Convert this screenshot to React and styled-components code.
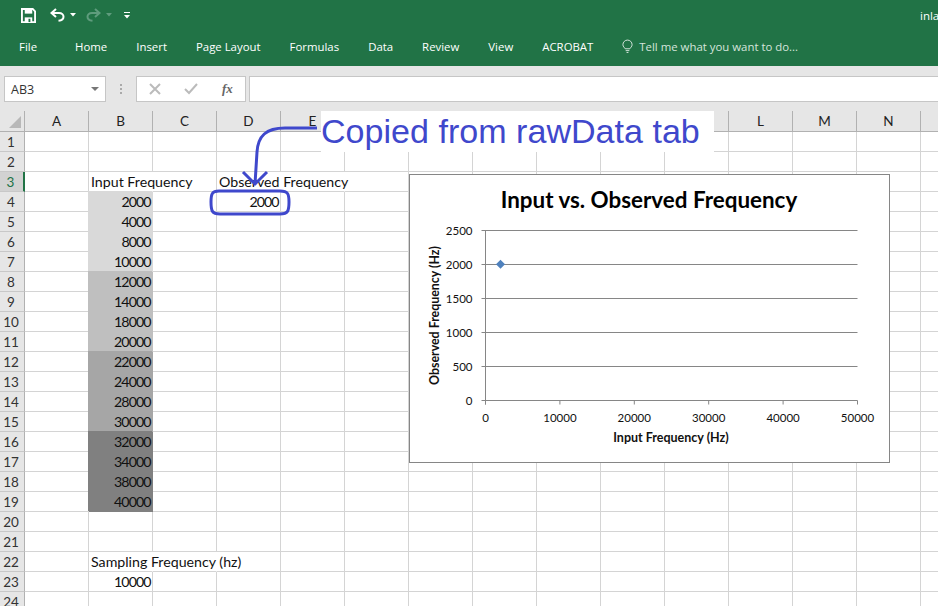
import React from "react";
import styled, { createGlobalStyle } from "styled-components";

// F to K sit under the white callout, so their letters don't show
const COLS = ["A", "B", "C", "D", "E", "", "", "", "", "", "", "L", "M", "N", ""];
const TABS = ["Home", "Insert", "Page Layout", "Formulas", "Data", "Review", "View", "ACROBAT"];
const INPUTS = [
  [2000, 4000, 8000, 10000],
  [12000, 14000, 18000, 20000],
  [22000, 24000, 28000, 30000],
  [32000, 34000, 38000, 40000],
];
const SHADES = ["#d9d9d9", "#bfbfbf", "#a6a6a6", "#808080"];

// cells with something in them, keyed by column + row
const cellData = {
  B3: { text: "Input Frequency", spill: true },
  D3: { text: "Observed Frequency", spill: true },
  E3: { spill: true },
  D4: { text: "2000", right: true },
  B22: { text: "Sampling Frequency (hz)", spill: true },
  C22: { spill: true },
  B23: { text: "10000", right: true },
};
INPUTS.forEach((group, g) =>
  group.forEach((value, i) => {
    cellData["B" + (4 + g * 4 + i)] = { text: String(value), right: true, fill: SHADES[g] };
  })
);

const GlobalStyle = createGlobalStyle`
  html, body {
    margin: 0;
    padding: 0;
    overflow: hidden;
    background: #fff;
  }
`;

const Page = styled.div`
  position: relative;
  width: 938px;
  height: 606px;
  overflow: hidden;
  font-family: "Lato", "Liberation Sans", sans-serif;
`;

const TitleBar = styled.div`
  height: 33px;
  box-sizing: border-box;
  background: #217346;
  display: flex;
  align-items: center;
  justify-content: space-between;
  padding: 0 0 3px 21px;
  color: #fff;
`;

const QuickAccess = styled.div`
  display: flex;
  align-items: center;
`;

const QuickIcon = styled.svg`
  display: block;
  margin-right: ${(p) => p.$gap || 0}px;
`;

const UserName = styled.span`
  font: 11.5px "Open Sans", sans-serif;
  width: 18px;
  overflow: hidden;
  white-space: nowrap;
`;

const TabBar = styled.div`
  height: 33px;
  background: #217346;
  display: flex;
  align-items: center;
  padding: 0 0 7px 19px;
  box-sizing: border-box;
  font: 11.4px "Open Sans", sans-serif;
  color: #fff;
`;

const Tab = styled.span`
  margin-right: 29px;
  white-space: nowrap;
  &:first-child {
    margin-right: 38px;
  }
`;

const TellMe = styled.span`
  display: flex;
  align-items: center;
  gap: 6px;
  color: #d5e5dc;
`;

const FormulaArea = styled.div`
  height: 45px;
  background: #e6e6e6;
  display: flex;
  padding: 10px 0 0 4px;
  box-sizing: border-box;
`;

const NameBox = styled.div`
  width: 102px;
  height: 26px;
  box-sizing: border-box;
  background: #fff;
  border: 1px solid #c6c6c6;
  display: flex;
  align-items: center;
  justify-content: space-between;
  padding: 0 6px;
  font: 12.5px "Open Sans", sans-serif;
  color: #333;
`;

const DropArrow = styled.span`
  width: 0;
  height: 0;
  border-left: 4px solid transparent;
  border-right: 4px solid transparent;
  border-top: 4px solid #777;
`;

const Dots = styled.div`
  width: 30px;
  display: flex;
  flex-direction: column;
  align-items: center;
  justify-content: center;
  gap: 2px;
  height: 26px;
  i {
    width: 2px;
    height: 2px;
    background: #aaa;
  }
`;

const FxBox = styled.div`
  width: 110px;
  height: 26px;
  box-sizing: border-box;
  background: #fff;
  border: 1px solid #c6c6c6;
  display: flex;
  align-items: center;
  padding-left: 12px;
  margin-right: 3px;
`;

const FxLabel = styled.span`
  font: italic bold 13px "Liberation Serif", serif;
  color: #666;
  margin-left: 23px;
`;

const FormulaInput = styled.div`
  flex: 1;
  height: 26px;
  box-sizing: border-box;
  background: #fff;
  border: 1px solid #c6c6c6;
  border-right: none;
`;

const Sheet = styled.div`
  display: grid;
  grid-template-columns: 25px repeat(15, 64px);
  grid-template-rows: 21px repeat(24, 20px);
`;

const Corner = styled.div`
  background: #e6e6e6;
  border-right: 1px solid #b1b1b1;
  border-bottom: 1px solid #b1b1b1;
  box-sizing: border-box;
  position: relative;
  &::after {
    content: "";
    position: absolute;
    right: 3px;
    bottom: 3px;
    border-left: 12px solid transparent;
    border-bottom: 12px solid #b8b8b8;
  }
`;

const ColHead = styled.div`
  background: #e6e6e6;
  border-right: 1px solid #b1b1b1;
  border-bottom: 1px solid #b1b1b1;
  box-sizing: border-box;
  font-size: 13.5px;
  color: #222;
  display: flex;
  align-items: center;
  justify-content: center;
`;

const RowHead = styled.div`
  background: ${(p) => (p.$active ? "#d2d2d2" : "#e6e6e6")};
  border-right: ${(p) => (p.$active ? "2px solid #217346" : "1px solid #b1b1b1")};
  border-bottom: 1px solid #c8c8c8;
  box-sizing: border-box;
  padding-right: 2px;
  font-size: 13.5px;
  color: ${(p) => (p.$active ? "#217346" : "#333")};
  display: flex;
  align-items: center;
  justify-content: center;
`;

const Cell = styled.div`
  box-sizing: border-box;
  border-right: 1px solid ${(p) => (p.$spill ? "transparent" : p.$fill || "#d4d4d4")};
  border-bottom: 1px solid ${(p) => p.$fill || "#d4d4d4"};
  background: ${(p) => p.$fill || "transparent"};
  box-shadow: ${(p) => (p.$fill ? `-1px -1px 0 ${p.$fill}` : "none")};
  font-size: 14.2px;
  line-height: 20px;
  color: #111;
  padding: 0 1.5px 0 2px;
  text-align: ${(p) => (p.$right ? "right" : "left")};
  letter-spacing: ${(p) => (p.$right ? "-0.95px" : "0")};
  white-space: nowrap;
`;

const Chart = styled.div`
  position: absolute;
  left: 409px;
  top: 174px;
  width: 481px;
  height: 289px;
  box-sizing: border-box;
  background: #fff;
  border: 1px solid #868686;
`;

const Callout = styled.div`
  position: absolute;
  left: 321px;
  top: 111px;
  width: 393px;
  height: 41px;
  background: #fff;
  color: #3f48cc;
  font: 34.1px/40px "Liberation Sans", sans-serif;
  white-space: nowrap;
`;

const Markup = styled.svg`
  position: absolute;
  left: 0;
  top: 0;
  pointer-events: none;
`;

const axisY = [2500, 2000, 1500, 1000, 500, 0];
const axisX = [0, 10000, 20000, 30000, 40000, 50000];

function FreqChart() {
  const left = 75.5;
  const right = 447.5;
  const top = 55.5;
  const bottom = 225.5;
  const step = (right - left) / 5;
  return (
    <svg width="479" height="287" fontFamily="Lato, sans-serif" fill="#111">
      <text x="239" y="33" textAnchor="middle" fontSize="22.4" fontWeight="700" fill="#000">
        Input vs. Observed Frequency
      </text>
      {axisY.map((v, i) => {
        const y = top + i * 34;
        return (
          <g key={v}>
            <line x1={left - 4} x2={right} y1={y} y2={y} stroke="#868686" />
            <text x={left - 13} y={y + 4} textAnchor="end" fontSize="11.5">
              {v}
            </text>
          </g>
        );
      })}
      <line x1={left} x2={left} y1={top} y2={bottom + 4} stroke="#868686" />
      {axisX.map((v, i) => {
        const x = left + i * step;
        return (
          <g key={v}>
            <line x1={x} x2={x} y1={bottom} y2={bottom + 4} stroke="#868686" />
            <text x={x} y={bottom + 21} textAnchor="middle" fontSize="11.5">
              {v}
            </text>
          </g>
        );
      })}
      <polygon points="90.5,84.8 95,89.3 90.5,93.8 86,89.3" fill="#4f81bd" />
      <text x="261" y="267" textAnchor="middle" fontSize="12.5" fontWeight="700">
        Input Frequency (Hz)
      </text>
      <text
        transform="translate(29 140.5) rotate(-90)"
        textAnchor="middle"
        fontSize="12.4"
        fontWeight="700"
      >
        Observed Frequency (Hz)
      </text>
    </svg>
  );
}

export default function App() {
  const rows = Array.from({ length: 24 }, (_, i) => i + 1);
  return (
    <Page>
      <GlobalStyle />
      <TitleBar>
        <QuickAccess>
          <QuickIcon width="15" height="15" viewBox="0 0 16 16" $gap={14}>
            <path d="M1 1h11.5L15 3.5V15H1z" fill="none" stroke="#fff" strokeWidth="2" />
            <rect x="4" y="1" width="8" height="5" fill="#fff" />
            <rect x="4" y="10" width="8" height="5" fill="#fff" />
            <rect x="8" y="11.5" width="2" height="3.5" fill="#217346" />
          </QuickIcon>
          <QuickIcon width="15" height="14" viewBox="0 0 15 14" $gap={5}>
            <path d="M6 1L1.5 5L6 9" fill="none" stroke="#fff" strokeWidth="2" />
            <path d="M2 5H9c3 0 4.5 2 4.5 3.7S12 12.4 8.5 12.8" fill="none" stroke="#fff" strokeWidth="2" />
          </QuickIcon>
          <QuickIcon width="6" height="4" viewBox="0 0 6 4" $gap={10}>
            <path d="M0 0h6L3 3.5z" fill="#fff" />
          </QuickIcon>
          <QuickIcon width="15" height="14" viewBox="0 0 15 14" $gap={5}>
            <path d="M9 1L13.5 5L9 9" fill="none" stroke="#5f9c7d" strokeWidth="2" />
            <path d="M13 5H6C3 5 1.5 7 1.5 8.7S3 12.4 6.5 12.8" fill="none" stroke="#5f9c7d" strokeWidth="2" />
          </QuickIcon>
          <QuickIcon width="6" height="4" viewBox="0 0 6 4" $gap={12}>
            <path d="M0 0h6L3 3.5z" fill="#5f9c7d" />
          </QuickIcon>
          <QuickIcon width="6" height="7" viewBox="0 0 6 7">
            <path d="M0 0h6v1H0zM0 3h6L3 6.5z" fill="#fff" />
          </QuickIcon>
        </QuickAccess>
        <UserName>inlab</UserName>
      </TitleBar>
      <TabBar>
        {["File", ...TABS].map((t) => (
          <Tab key={t}>{t}</Tab>
        ))}
        <TellMe>
          <svg width="11" height="15" viewBox="0 0 12 15" fill="none" stroke="#e3eee8">
            <path d="M3.5 10C2.5 8.5 1 7.5 1 5.5a5 5 0 0 1 10 0c0 2-1.5 3-2.5 4.5z" />
            <path d="M4 12h4M5 14h2" />
          </svg>
          Tell me what you want to do...
        </TellMe>
      </TabBar>
      <FormulaArea>
        <NameBox>
          AB3
          <DropArrow />
        </NameBox>
        <Dots>
          <i />
          <i />
          <i />
        </Dots>
        <FxBox>
          <svg width="50" height="14" viewBox="0 0 50 14" fill="none" stroke="#bbb" strokeWidth="2">
            <path d="M1 2l10 10M11 2L1 12" />
            <path d="M36 7l4 4 8-9" />
          </svg>
          <FxLabel>fx</FxLabel>
        </FxBox>
        <FormulaInput />
      </FormulaArea>
      <Sheet>
        <Corner />
        {COLS.map((c, i) => (
          <ColHead key={i}>{c}</ColHead>
        ))}
        {rows.map((r) => (
          <React.Fragment key={r}>
            <RowHead $active={r === 3}>{r}</RowHead>
            {COLS.map((c, i) => {
              const data = cellData[c + r] || {};
              return (
                <Cell key={i} $right={data.right} $fill={data.fill} $spill={data.spill}>
                  {data.text}
                </Cell>
              );
            })}
          </React.Fragment>
        ))}
      </Sheet>
      <Chart>
        <FreqChart />
      </Chart>
      <Callout>Copied from rawData tab</Callout>
      <Markup width="938" height="606" fill="none" stroke="#3f48cc" strokeWidth="3">
        <path d="M317 128H285C266 128 258 136 257 152L255 184" />
        <path d="M243 172L255 184L267 172" />
        <path d="M219 191H280C288 191 289 194 289 202C289 211 288 214 280 214H220C212 214 211 211 211 202C211 194 212 191 219 191Z" />
      </Markup>
    </Page>
  );
}
